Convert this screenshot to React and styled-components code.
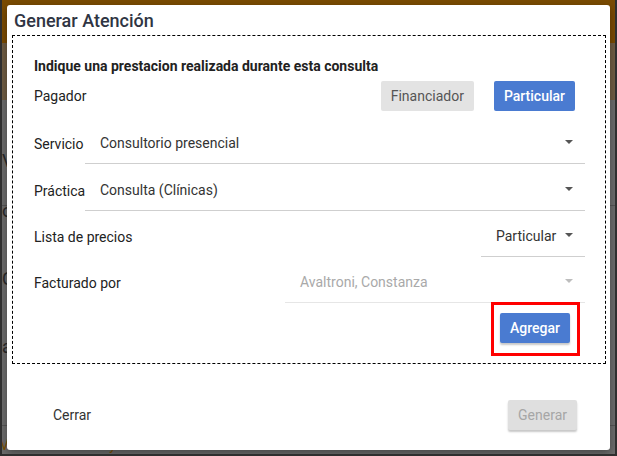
import React from "react";
import styled, { createGlobalStyle } from "styled-components";

const GlobalStyle = createGlobalStyle`
  html, body {
    margin: 0;
    padding: 0;
    font-family: Roboto, "Liberation Sans", Arial, sans-serif;
  }
  * { box-sizing: border-box; }
`;

const Caret = () => (
  <svg width="8" height="4" viewBox="0 0 8 4">
    <path d="M0 0 L8 0 L4 4 Z" fill="currentColor" />
  </svg>
);

export default function App() {
  return (
    <>
      <GlobalStyle />
      <Page>
        <TopBar />
        <SubBar />
        <Body>
          <SideLetter $top={150}>V</SideLetter>
          <Divider $top={205} />
          <SideLetter $top={200}>o</SideLetter>
          <SideLetter $top={268}>C</SideLetter>
          <SideLetter $top={336}>a</SideLetter>
          <Divider $top={425} />
          <DayText>Viernes 10 De Mayo</DayText>
        </Body>

        <Modal>
          <Title>Generar Atención</Title>
          <Panel>
            <Heading>Indique una prestacion realizada durante esta consulta</Heading>
            <PayerRow>
              <Label>Pagador</Label>
              <Toggle>
                <ToggleButton>Financiador</ToggleButton>
                <ToggleButton $active>Particular</ToggleButton>
              </Toggle>
            </PayerRow>

            <FieldRow $gap={16}>
              <Label $width={51}>Servicio</Label>
              <Select $grow>
                <SelectText>Consultorio presencial</SelectText>
                <Caret />
              </Select>
            </FieldRow>

            <FieldRow $gap={10}>
              <Label $width={51}>Práctica</Label>
              <Select $grow>
                <SelectText>Consulta (Clínicas)</SelectText>
                <Caret />
              </Select>
            </FieldRow>

            <FieldRow $gap={9}>
              <Label>Lista de precios</Label>
              <Select $width={104}>
                <SelectText>Particular</SelectText>
                <Caret />
              </Select>
            </FieldRow>

            <FieldRow $gap={9}>
              <Label>Facturado por</Label>
              <Select $width={300} $disabled>
                <SelectText>Avaltroni, Constanza</SelectText>
                <Caret />
              </Select>
            </FieldRow>

            <Highlight>
              <RaisedButton $primary>Agregar</RaisedButton>
            </Highlight>
          </Panel>

          <Footer>
            <FlatButton>Cerrar</FlatButton>
            <RaisedButton $disabled>Generar</RaisedButton>
          </Footer>
        </Modal>
      </Page>
    </>
  );
}

const Page = styled.div`
  position: relative;
  width: 617px;
  height: 456px;
  overflow: hidden;
  background: #6c6c6c;
  border: 2px solid #2f2f2f;
  border-top: 0;
  display: flex;
  flex-direction: column;
`;

const TopBar = styled.div`
  height: 43px;
  background: #7a4b02;
`;

const SubBar = styled.div`
  height: 57px;
  background: #6f5d43;
`;

const Body = styled.div`
  position: relative;
  flex: 1;
`;

const SideLetter = styled.span`
  position: absolute;
  left: 0;
  top: ${(p) => p.$top - 100}px;
  font-size: 18px;
  color: #2a2a2a;
`;

const Divider = styled.div`
  position: absolute;
  left: 0;
  right: 0;
  top: ${(p) => p.$top - 100}px;
  height: 1px;
  background: #555;
`;

const DayText = styled.div`
  position: absolute;
  left: -2px;
  top: 337px;
  font-size: 14px;
  line-height: 16px;
  color: #7d5000;
`;

const Modal = styled.div`
  position: absolute;
  left: 5px;
  top: 5px;
  width: 603px;
  height: 445px;
  background: #fff;
  border-radius: 3px;
  box-shadow: 0 3px 8px rgba(0, 0, 0, 0.35);
  display: flex;
  flex-direction: column;
`;

const Title = styled.h2`
  margin: 0;
  height: 30px;
  padding: 5px 0 0 7px;
  font-size: 18px;
  font-weight: 500;
  line-height: 21px;
  color: #2f3543;
`;

const Panel = styled.div`
  margin: 0 4px 0 5px;
  height: 329px;
  border: 1px dashed #000;
  padding: 22px 20px 0 21px;
  display: flex;
  flex-direction: column;
`;

const Heading = styled.div`
  font-size: 14px;
  font-weight: 700;
  line-height: 16px;
  color: #222;
`;

const PayerRow = styled.div`
  margin-top: 7px;
  height: 30px;
  display: flex;
  align-items: center;
  justify-content: space-between;
`;

const Label = styled.div`
  width: ${(p) => (p.$width ? `${p.$width}px` : "auto")};
  font-size: 14px;
  color: #222;
  white-space: nowrap;
`;

const Toggle = styled.div`
  display: flex;
  gap: 20px;
  margin-right: 10px;
`;

const ToggleButton = styled.button`
  height: 30px;
  padding: 0 10px;
  border: 0;
  border-radius: 2px;
  font-family: inherit;
  font-size: 14px;
  font-weight: ${(p) => (p.$active ? 500 : 400)};
  background: ${(p) => (p.$active ? "#4a7bd1" : "#e3e3e3")};
  color: ${(p) => (p.$active ? "#fff" : "#555")};
`;

const FieldRow = styled.div`
  margin-top: ${(p) => p.$gap}px;
  height: 37px;
  display: flex;
  justify-content: space-between;

  ${Label} {
    display: flex;
    align-items: center;
    padding-bottom: 4px;
  }
`;

const Select = styled.div`
  ${(p) => (p.$grow ? "flex: 1;" : `width: ${p.$width}px;`)}
  display: flex;
  align-items: center;
  justify-content: space-between;
  padding: 0 12px 4px 15px;
  border-bottom: 1px solid ${(p) => (p.$disabled ? "#e6e6e6" : "#cfcfcf")};
  font-size: 14px;
  color: ${(p) => (p.$disabled ? "#a9a9a9" : "#333")};

  svg {
    color: ${(p) => (p.$disabled ? "#bdbdbd" : "#555")};
    margin-top: -3px;
  }
`;

const SelectText = styled.span`
  white-space: nowrap;
`;

const Highlight = styled.div`
  align-self: flex-end;
  margin: -1px 5px 0 0;
  width: 89px;
  height: 54px;
  border: 3px solid #ff0000;
  padding: 8px 0 0 6px;
`;

const RaisedButton = styled.button`
  height: 30px;
  padding: 0 10px;
  border: 0;
  border-radius: 2px;
  font-family: inherit;
  font-size: 14px;
  font-weight: ${(p) => (p.$primary ? 500 : 400)};
  background: ${(p) => (p.$primary ? "#4a7bd1" : "#dfdfdf")};
  color: ${(p) => (p.$primary ? "#fff" : "#a6a6a6")};
  box-shadow: 0 2px 2px rgba(0, 0, 0, 0.22);
`;

const Footer = styled.div`
  flex: 1;
  display: flex;
  align-items: flex-start;
  justify-content: space-between;
  padding: 36px 33px 0 30px;
`;

const FlatButton = styled.button`
  height: 30px;
  padding: 0 16px;
  border: 0;
  background: none;
  font-family: inherit;
  font-size: 14px;
  color: #333;
`;
